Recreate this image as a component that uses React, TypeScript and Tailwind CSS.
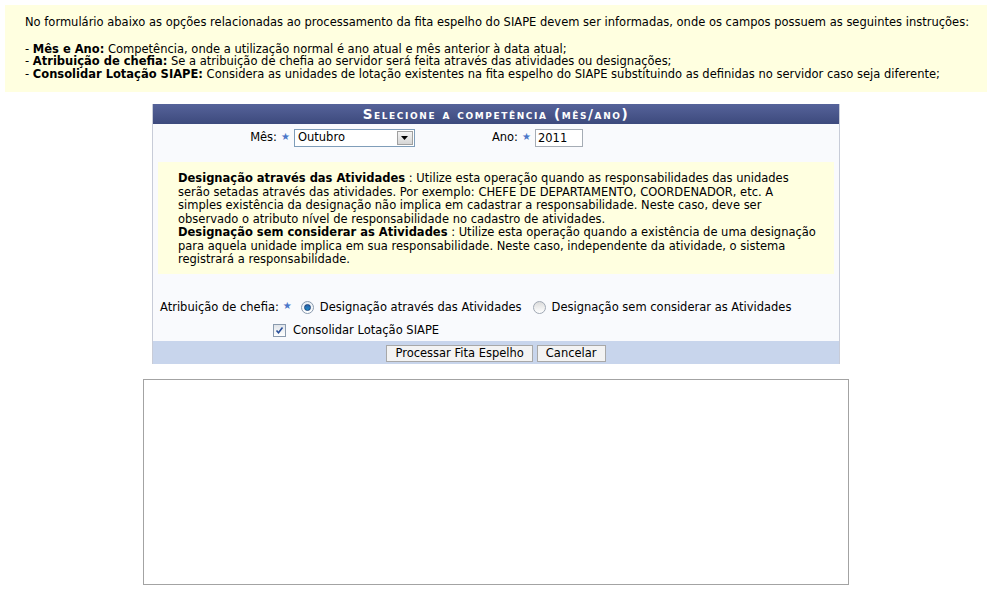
import React from "react";

const Star = () => (
  <span className="text-[10px] text-[#4a76c9] leading-none mx-[4px] relative top-[-1px]">★</span>
);

export default function App() {
  return (
    <div
      className="w-[992px] h-[589px] bg-white text-[11.5px] text-black leading-[13px] relative"
      style={{ fontFamily: "Verdana, 'DejaVu Sans', sans-serif" }}
    >
      <div className="pt-[5px] px-[5px]">
        <div className="bg-[#ffffe0] h-[87px] pl-[20px] pt-[11px] leading-[12.7px]">
          <p className="mb-[14px]">
            No formulário abaixo as opções relacionadas ao processamento da fita espelho do SIAPE devem ser informadas, onde os campos possuem as seguintes instruções:
          </p>
          <p>
            - <b>Mês e Ano:</b> Competência, onde a utilização normal é ano atual e mês anterior à data atual;
          </p>
          <p>
            - <b>Atribuição de chefia:</b> Se a atribuição de chefia ao servidor será feita através das atividades ou designações;
          </p>
          <p>
            - <b>Consolidar Lotação SIAPE:</b> Considera as unidades de lotação existentes na fita espelho do SIAPE substituindo as definidas no servidor caso seja diferente;
          </p>
        </div>
      </div>

      <div className="ml-[152px] mt-[12px] w-[688px] border-x border-[#c8ccd8] bg-[#f9fafd]">
        <div className="h-[20px] bg-gradient-to-b from-[#56639a] to-[#3d4a7d] text-white font-bold text-center tracking-[1.6px] [font-variant:small-caps] text-[13.5px] leading-[20px]">
          Selecione a competência (mês/ano)
        </div>
        <div className="flex items-center h-[26px] pt-[1px]">
          <div className="w-[124px] text-right">Mês:</div>
          <Star />
          <div className="w-[121px] h-[18px] border border-[#7f9db9] bg-white flex items-center justify-between">
            <span className="pl-[3px]">Outubro</span>
            <div className="w-[16px] h-[14px] mr-[1px] bg-gradient-to-b from-[#f4f4f4] to-[#d6d6d6] border border-[#a0a0a0] flex items-center justify-center">
              <svg width="7" height="4" viewBox="0 0 7 4"><path d="M0 0h7L3.5 4z" fill="#000" /></svg>
            </div>
          </div>
          <div className="w-[103px] text-right">Ano:</div>
          <Star />
          <div className="w-[48px] h-[18px] border border-[#a5acb5] bg-white pl-[2px] leading-[16px]">2011</div>
        </div>

        <div className="mx-[5px] mt-[12px] bg-[#ffffe0] h-[112px] pl-[20px] pt-[10px] leading-[13.5px]">
          <p>
            <b>Designação através das Atividades</b> : Utilize esta operação quando as responsabilidades das unidades
            <br />
            serão setadas através das atividades. Por exemplo: CHEFE DE DEPARTAMENTO, COORDENADOR, etc. A
            <br />
            simples existência da designação não implica em cadastrar a responsabilidade. Neste caso, deve ser
            <br />
            observado o atributo nível de responsabilidade no cadastro de atividades.
            <br />
            <b>Designação sem considerar as Atividades</b> : Utilize esta operação quando a existência de uma designação
            <br />
            para aquela unidade implica em sua responsabilidade. Neste caso, independente da atividade, o sistema
            <br />
            registrará a responsabilidade.
          </p>
        </div>

        <div className="flex items-center mt-[25px] h-[16px] pl-[7px]">
          <span>Atribuição de chefia:</span>
          <Star />
          <span className="ml-[5px] w-[13px] h-[13px] rounded-full border border-[#8a9aae] bg-gradient-to-b from-[#e8eef4] to-[#ffffff] flex items-center justify-center">
            <span className="w-[7px] h-[7px] rounded-full bg-gradient-to-b from-[#2a5fa8] to-[#1b8bc7] border border-[#17427a]"></span>
          </span>
          <span className="ml-[6px]">Designação através das Atividades</span>
          <span className="ml-[11px] w-[13px] h-[13px] rounded-full border border-[#a0a8b4] bg-gradient-to-b from-[#dcdcdc] to-[#ffffff]"></span>
          <span className="ml-[6px]">Designação sem considerar as Atividades</span>
        </div>

        <div className="flex items-center mt-[7px] h-[16px] pl-[120px]">
          <span className="w-[13px] h-[13px] border border-[#8a9aae] bg-gradient-to-b from-[#e0e4ea] to-[#ffffff] flex items-center justify-center">
            <svg width="9" height="9" viewBox="0 0 9 9">
              <path d="M1.5 4.5L3.5 6.8L7.5 1.5" stroke="#2a4f9a" strokeWidth="1.6" fill="none" />
            </svg>
          </span>
          <span className="ml-[7px]">Consolidar Lotação SIAPE</span>
        </div>

        <div className="mt-[3px] h-[23px] bg-[#c8d5ec] flex items-center justify-center gap-[4px] pt-[1px]">
          <button className="h-[17px] px-[8px] bg-[#f3f3f3] border border-[#a8a8a8] leading-[15px] text-[11.5px]">Processar Fita Espelho</button>
          <button className="h-[17px] px-[8px] bg-[#f3f3f3] border border-[#a8a8a8] leading-[15px] text-[11.5px]">Cancelar</button>
        </div>
      </div>

      <div className="ml-[143px] mt-[15px] w-[706px] h-[206px] border border-[#a3a3a3] bg-white"></div>
    </div>
  );
}
